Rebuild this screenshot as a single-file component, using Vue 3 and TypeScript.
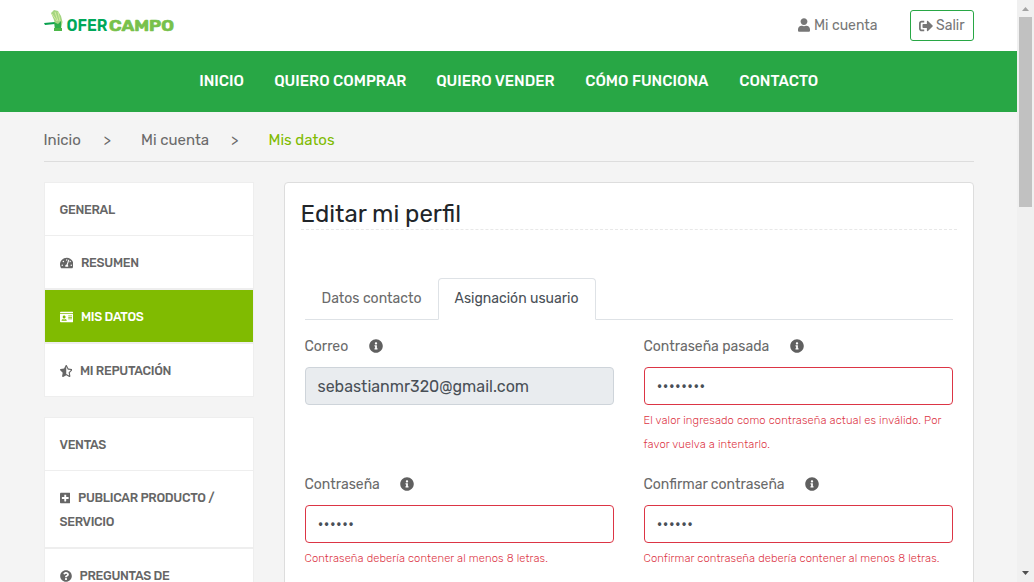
<script setup lang="ts">
interface Icon { w: number; d: string }
interface Item { label: string; icon: string; cls: string; active?: boolean }
interface Field { label: string; value: string; cls: string; error?: string; disabled?: boolean }

const icons: Record<string, Icon> = {
  user: { w: 448, d: 'M224 256c70.7 0 128-57.300 128-128S294.700 0 224 0 96 57.300 96 128s57.300 128 128 128zm89.600 32h-16.700c-22.200 10.200-46.900 16-72.900 16s-50.600-5.800-72.900-16h-16.700C60.200 288 0 348.200 0 422.400V464c0 26.500 21.500 48 48 48h352c26.500 0 48-21.500 48-48v-41.600c0-74.200-60.200-134.400-134.400-134.400z' },
  exit: { w: 512, d: 'M497 273L329 441c-15 15-41 4.500-41-17v-96H152c-13.300 0-24-10.700-24-24v-96c0-13.300 10.700-24 24-24h136V88c0-21.400 25.900-32 41-17l168 168c9.300 9.400 9.300 24.600 0 34zM192 436v-40c0-6.600-5.400-12-12-12H96c-17.700 0-32-14.300-32-32V160c0-17.700 14.300-32 32-32h84c6.600 0 12-5.400 12-12V76c0-6.600-5.400-12-12-12H96c-53 0-96 43-96 96v192c0 53 43 96 96 96h84c6.600 0 12-5.400 12-12z' },
  gauge: { w: 576, d: 'M288 32C128.900 32 0 160.900 0 320c0 52.800 14.200 102.300 39.100 144.800 5.600 9.600 16.300 15.200 27.400 15.200h443c11.100 0 21.800-5.600 27.400-15.200C561.800 422.300 576 372.800 576 320c0-159.100-128.900-288-288-288zm0 64c14.700 0 26.600 10.100 30.300 23.700-1.100 2.300-2.600 4.200-3.500 6.700l-9.200 27.700c-5.100 3.500-11 6-17.600 6-17.700 0-32-14.300-32-32S270.300 96 288 96zM96 384c-17.700 0-32-14.300-32-32s14.300-32 32-32 32 14.300 32 32-14.300 32-32 32zm48-160c-17.700 0-32-14.300-32-32s14.300-32 32-32 32 14.300 32 32-14.300 32-32 32zm246.800-72.400l-61.300 184C343.100 347.300 352 364.500 352 384c0 11.700-3.400 22.600-8.900 32H232.900c-5.500-9.500-8.900-20.300-8.900-32 0-33.900 26.500-61.400 59.900-63.600l61.300-184c4.200-12.600 17.700-19.500 30.400-15.200 12.600 4.200 19.400 17.800 15.200 30.400zm14.700 57.200l15.500-46.600c3.500-1.300 7.100-2.200 11.100-2.200 17.700 0 32 14.300 32 32s-14.300 32-32 32c-11.400 0-20.900-6.300-26.600-15.200zM480 384c-17.700 0-32-14.300-32-32s14.300-32 32-32 32 14.300 32 32-14.300 32-32 32z' },
  card: { w: 576, d: 'M528 32H48C21.500 32 0 53.500 0 80v16h576V80c0-26.500-21.500-48-48-48zM0 432c0 26.500 21.500 48 48 48h480c26.500 0 48-21.500 48-48V128H0v304zm352-232c0-4.400 3.600-8 8-8h144c4.400 0 8 3.600 8 8v16c0 4.400-3.600 8-8 8H360c-4.400 0-8-3.600-8-8v-16zm0 64c0-4.400 3.600-8 8-8h144c4.400 0 8 3.600 8 8v16c0 4.400-3.600 8-8 8H360c-4.400 0-8-3.600-8-8v-16zm0 64c0-4.400 3.600-8 8-8h144c4.400 0 8 3.600 8 8v16c0 4.400-3.600 8-8 8H360c-4.400 0-8-3.600-8-8v-16zM176 192c35.300 0 64 28.700 64 64s-28.700 64-64 64-64-28.700-64-64 28.700-64 64-64zM67.100 396.200C75.500 370.500 99.600 352 128 352h8.200c12.300 5.100 25.700 8 39.800 8s27.600-2.900 39.800-8h8.200c28.400 0 52.500 18.500 60.900 44.200 3.200 9.900-5.200 19.800-15.600 19.800H82.700c-10.400 0-18.800-10-15.600-19.800z' },
  star: { w: 536, d: 'M508.550 171.510L362.180 150.200 296.770 17.810C290.890 5.980 279.420 0 267.950 0c-11.400 0-22.790 5.900-28.690 17.810l-65.430 132.380-146.380 21.290c-26.250 3.800-36.770 36.090-17.740 54.590l105.890 103-25.060 145.480C86.980 495.330 103.570 512 122.150 512c4.930 0 10-1.170 14.870-3.750l130.950-68.680 130.940 68.700c4.860 2.550 9.920 3.710 14.830 3.710 18.600 0 35.220-16.610 31.660-37.400l-25.030-145.490 105.910-102.980c19.040-18.500 8.520-50.800-17.730-54.600zm-121.740 123.200l-18.120 17.620 4.280 24.880 19.520 113.450-102.130-53.590-22.380-11.740.030-317.190 51.030 103.290 11.180 22.630 25.010 3.640 114.230 16.630-82.650 80.380z' },
  plus: { w: 448, d: 'M400 32H48C21.500 32 0 53.500 0 80v352c0 26.500 21.500 48 48 48h352c26.500 0 48-21.500 48-48V80c0-26.500-21.500-48-48-48zm-32 252c0 6.600-5.400 12-12 12h-92v92c0 6.600-5.400 12-12 12h-56c-6.600 0-12-5.400-12-12v-92H92c-6.600 0-12-5.400-12-12v-56c0-6.600 5.400-12 12-12h92v-92c0-6.600 5.400-12 12-12h56c6.600 0 12 5.400 12 12v92h92c6.600 0 12 5.400 12 12v56z' },
  help: { w: 512, d: 'M504 256c0 136.997-111.043 248-248 248S8 392.997 8 256C8 119.083 119.043 8 256 8s248 111.083 248 248zM262.655 90c-54.497 0-89.255 22.957-116.549 63.758-3.536 5.286-2.353 12.415 2.715 16.258l34.699 26.310c5.205 3.947 12.621 3.008 16.665-2.122 17.864-22.658 30.113-35.797 57.303-35.797 20.429 0 45.698 13.148 45.698 32.958 0 14.976-12.363 22.667-32.534 33.976C247.128 238.528 216 254.941 216 296v4c0 6.627 5.373 12 12 12h56c6.627 0 12-5.373 12-12v-1.333c0-28.462 83.186-29.647 83.186-106.667 0-58.002-60.165-102-116.531-102zM256 338c-25.365 0-46 20.635-46 46 0 25.364 20.635 46 46 46s46-20.636 46-46c0-25.365-20.635-46-46-46z' },
  info: { w: 512, d: 'M256 8C119.043 8 8 119.083 8 256c0 136.997 111.043 248 248 248s248-111.003 248-248C504 119.083 392.957 8 256 8zm0 110c23.196 0 42 18.804 42 42s-18.804 42-42 42-42-18.804-42-42 18.804-42 42-42zm56 254c0 6.627-5.373 12-12 12h-88c-6.627 0-12-5.373-12-12v-24c0-6.627 5.373-12 12-12h12v-64h-12c-6.627 0-12-5.373-12-12v-24c0-6.627 5.373-12 12-12h64c6.627 0 12 5.373 12 12v100h12c6.627 0 12 5.373 12 12v24z' },
}
const nav = [
  { label: 'INICIO', cls: 'n1' },
  { label: 'QUIERO COMPRAR', cls: 'n2' },
  { label: 'QUIERO VENDER', cls: 'n3' },
  { label: 'CÓMO FUNCIONA', cls: 'n4' },
  { label: 'CONTACTO', cls: 'n5' },
]
const groups: { title: string; items: Item[] }[] = [
  {
    title: 'GENERAL',
    items: [
      { label: 'RESUMEN', icon: 'gauge', cls: 'wide' },
      { label: 'MIS DATOS', icon: 'card', cls: 'wide', active: true },
      { label: 'MI REPUTACIÓN', icon: 'star', cls: 'mid' },
    ],
  },
  {
    title: 'VENTAS',
    items: [
      { label: 'PUBLICAR PRODUCTO / SERVICIO', icon: 'plus', cls: 'narrow' },
      { label: 'PREGUNTAS DE', icon: 'help', cls: 'round' },
    ],
  },
]
const fields: Field[] = [
  { label: 'Correo', value: 'sebastianmr320@gmail.com', cls: 'f1', disabled: true },
  { label: 'Contraseña pasada', value: '••••••••', cls: 'f2', error: 'El valor ingresado como contraseña actual es inválido. Por favor vuelva a intentarlo.' },
  { label: 'Contraseña', value: '••••••', cls: 'f3', error: 'Contraseña debería contener al menos 8 letras.' },
  { label: 'Confirmar contraseña', value: '••••••', cls: 'f4', error: 'Confirmar contraseña debería contener al menos 8 letras.' },
]
</script>

<template>
  <div class="window">
    <div class="page">
      <header class="top">
        <svg class="logo" width="132" height="26" viewBox="0 0 132 26">
          <path d="M0 13L11 12v2L1 15z" fill="#0aa14f" />
          <path d="M7 3l3-3 4 1 3 5 1.500 6-1.500 7h-5L10 10z" fill="#a5d582" />
          <path d="M8 4l5 7M11 2l3 9M14 2l2 9" fill="none" stroke="#d3eba0" stroke-width="1" />
          <path d="M10 12l4 2 3-3v7l-6 2z" fill="#2fae4b" />
          <path d="M10 18h8v3h-8z" fill="#4cb748" />
          <text class="logo-a" x="22.500" y="21" textLength="41" lengthAdjust="spacingAndGlyphs">OFER</text>
          <text class="logo-b" x="65" y="20.500" textLength="65" lengthAdjust="spacingAndGlyphs">CAMPO</text>
        </svg>
        <div class="account">
          <a class="me"><svg class="i-user" viewBox="0 0 448 512"><path :d="icons.user.d" /></svg><span>Mi cuenta</span></a>
          <a class="exit"><svg class="i-exit" viewBox="0 0 512 512"><path :d="icons.exit.d" /></svg><span>Salir</span></a>
        </div>
      </header>
      <nav class="nav">
        <a v-for="n in nav" :key="n.label" :class="n.cls">{{ n.label }}</a>
      </nav>
      <div class="crumbs">
        <span class="c1">Inicio</span><span class="sep s1">&gt;</span><span class="c2">Mi cuenta</span><span class="sep s2">&gt;</span><span class="c3">Mis datos</span>
      </div>
      <div class="columns">
        <aside>
          <ul v-for="g in groups" :key="g.title">
            <li class="head">{{ g.title }}</li>
            <li v-for="it in g.items" :key="it.label" :class="[it.cls, { active: it.active }]">
              <svg :viewBox="`0 0 ${icons[it.icon].w} 512`"><path :d="icons[it.icon].d" /></svg>{{ it.label }}
            </li>
          </ul>
        </aside>
        <main class="card">
          <h1>Editar mi perfil</h1>
          <div class="tabs">
            <a class="tab t1">Datos contacto</a>
            <a class="tab t2 on">Asignación usuario</a>
          </div>
          <div class="grid">
            <div v-for="f in fields" :key="f.label" class="field" :class="f.cls">
              <label><span>{{ f.label }}</span><svg viewBox="0 0 512 512"><path :d="icons.info.d" /></svg></label>
              <div class="input" :class="{ disabled: f.disabled, invalid: f.error }">{{ f.value }}</div>
              <p v-if="f.error">{{ f.error }}</p>
            </div>
          </div>
        </main>
      </div>
    </div>
    <div class="scroll">
      <svg width="17" height="17" viewBox="0 0 17 17"><path d="M5 11L8.500 7L12 11z" fill="#a3a3a3" /></svg>
      <div class="thumb"></div>
      <svg class="down" width="17" height="17" viewBox="0 0 17 17"><path d="M5 6L8.500 10L12 6z" fill="#505050" /></svg>
    </div>
  </div>
</template>

<style>
body { overflow: hidden; }
</style>

<style scoped>
* { box-sizing: border-box; }
.window { display: flex; width: 1034px; height: 582px; overflow: hidden; background: #f4f4f4; font-family: Rubik, Roboto, "Noto Sans", sans-serif; color: #6a6a6a; font-size: 14px; font-weight: 400; line-height: 24px; }
.page { width: 1017px; height: 582px; overflow: hidden; }
svg { fill: currentColor; flex: none; }
.top { height: 51px; background: #fff; display: flex; justify-content: space-between; padding: 10px 43px 0 43.500px; }
.logo-a, .logo-b { font: 600 16px Rubik, "Open Sans", sans-serif; fill: #00a859; }
.logo-b { font-size: 15px; fill: #78c14b; stroke: #78c14b; stroke-width: .7px; }
.account { display: flex; align-items: flex-start; color: #777; }
.me { display: flex; align-items: center; height: 30px; margin-right: 33px; }
.i-user { width: 12px; height: 14px; margin-right: 4px; }
.me span { width: 63px; white-space: nowrap; padding-top: 2px; }
.exit { display: flex; align-items: center; width: 64px; height: 31px; border: 1px solid #28a745; border-radius: 3px; padding: 0 0 0 8px; }
.exit span { padding-top: 1px; }
.i-exit { width: 14px; height: 14px; margin-right: 3px; }
.nav { height: 61px; background: #28a745; color: #fff; font-size: 15px; font-weight: 500; display: flex; align-items: center; gap: 30px; padding: 0 0 1px 199.200px; white-space: nowrap; }
.n1 { width: 45px; }
.n2 { width: 132px; }
.n3 { width: 119px; }
.n4 { width: 124px; }
.n5 { width: 79px; }
.crumbs { height: 50px; margin: 0 43.500px; font-size: 15px; border-bottom: 1px solid #ddd; display: flex; padding-top: 16px; white-space: nowrap; }
.c1 { width: 60px; }
.s1 { width: 37.500px; }
.c2 { width: 90px; }
.s2 { width: 37.500px; }
.c3 { color: #80bb01; }
.columns { display: flex; padding: 20px 43px 0 43.500px; gap: 30px; align-items: flex-start; }
aside { width: 210px; font-size: 12.500px; letter-spacing: -.3px; font-weight: 500; color: #666; }
ul { list-style: none; margin: 0 0 20px; padding: 0; }
li { background: #fff; border: 1px solid #eee; padding: 15px 14px 13px 15px; }
.head { border-bottom: 0; }
li svg { display: inline-block; height: 12px; vertical-align: -2px; margin-right: 8px; }
.wide svg { width: 13.500px; }
.mid svg { width: 12.500px; }
.narrow svg { width: 10.500px; }
.round svg { width: 12px; }
.active { background: #80bb01; color: #fff; }
.card { width: 690px; height: 600px; background: #fff; border: 1px solid #ddd; border-radius: 4px; padding: 16px; }
h1 { margin: 0; height: 31px; font-size: 24px; font-weight: 400; line-height: 30px; color: #212529; border-bottom: 1px dashed #e8e8e8; }
.tabs { display: flex; align-items: flex-end; height: 42px; margin: 48px 4px 0; border-bottom: 1px solid #dee2e6; white-space: nowrap; }
.tab { height: 42px; margin-bottom: -1px; border: 1px solid transparent; border-radius: 4px 4px 0 0; padding: 8px 16px; }
.t1 { width: 133px; }
.t2 { width: 158px; color: #495057; }
.on { background: #fff; border-color: #dee2e6 #dee2e6 #fff; }
.grid { display: grid; grid-template-columns: 309px 309px; gap: 0 30px; margin: 0 4px; padding-top: 14px; }
.field { min-height: 138px; }
label { display: flex; align-items: center; height: 24px; margin-bottom: 9px; gap: 20.500px; }
label span { padding-top: 2px; }
label svg { width: 14px; height: 14px; color: #606060; }
.input { height: 38px; border: 1px solid #ced4da; border-radius: 4px; padding: 6px 12px; font-size: 16px; color: #495057; background: #fff; }
.disabled { background: #e9ecef; padding-top: 7px; }
.invalid { border-color: #dc3545; }
p { margin: 4px 0 0; font-size: 11.200px; font-weight: 300; letter-spacing: .11px; line-height: 24px; color: #dc3545; }
.scroll { width: 17px; height: 582px; background: #f0f0f0; position: relative; display: flex; flex-direction: column; }
.thumb { width: 13px; height: 190px; margin: 0 2px; background: #c1c1c1; }
.down { margin-top: auto; }
</style>
